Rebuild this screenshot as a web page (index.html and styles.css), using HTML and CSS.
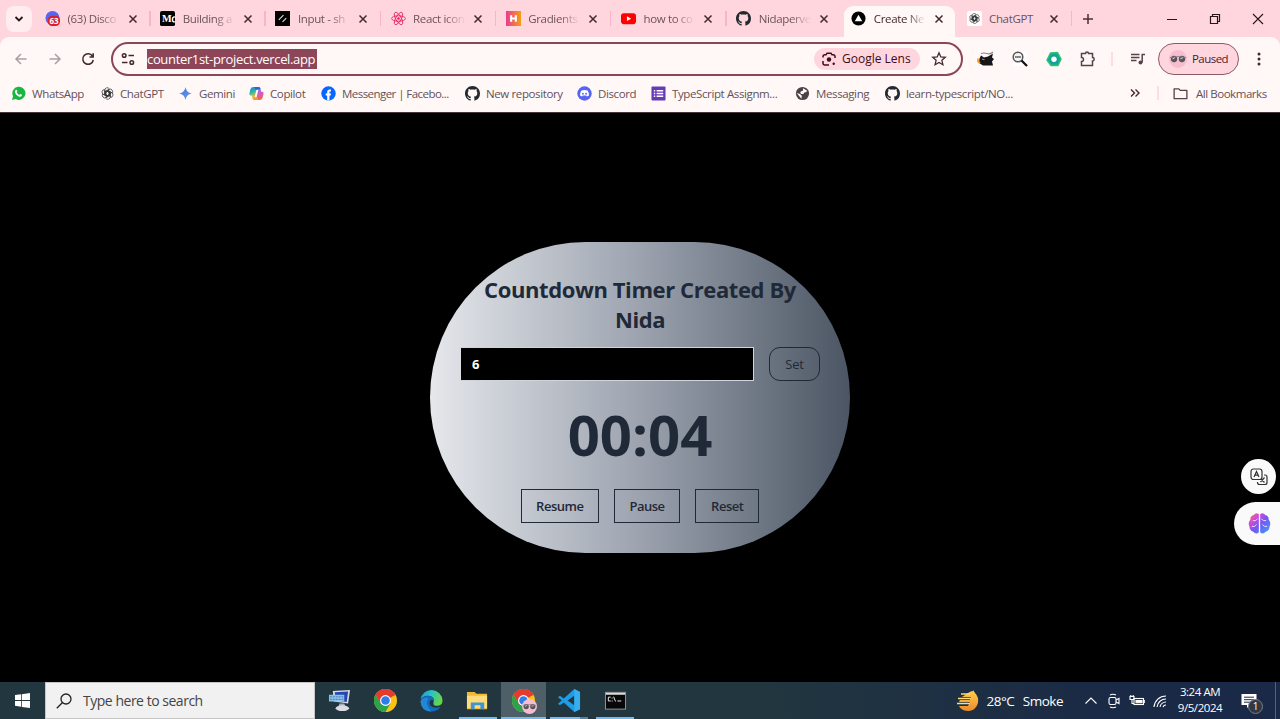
FILE: index.html
```html
<!DOCTYPE html>
<html lang="en">
<head>
<meta charset="utf-8">
<title>Countdown Timer</title>
<link rel="stylesheet" href="styles.css">
</head>
<body>
<svg class="defs" aria-hidden="true">
  <defs>
    <symbol id="x" viewBox="0 0 10 10"><path d="M1.500 1.500l7 7M8.500 1.500l-7 7" stroke="currentColor" stroke-width="1.500" fill="none"/></symbol>
    <symbol id="github" viewBox="0 0 16 16"><path fill="#24292f" d="M8 0C3.580 0 0 3.580 0 8c0 3.540 2.290 6.530 5.470 7.590.4.070.55-.17.55-.38 0-.19-.01-.82-.01-1.490-2.010.37-2.530-.49-2.690-.94-.09-.23-.48-.94-.82-1.130-.28-.15-.68-.52-.01-.53.63-.01 1.080.58 1.230.82.72 1.210 1.870.87 2.330.66.070-.52.28-.87.51-1.070-1.780-.2-3.640-.89-3.640-3.950 0-.87.31-1.590.82-2.150-.08-.2-.36-1.020.080-2.120 0 0 .67-.21 2.200.82.64-.18 1.320-.27 2-.27s1.360.09 2 .27c1.530-1.040 2.200-.82 2.200-.82.44 1.100.16 1.920.08 2.120.51.56.82 1.270.82 2.150 0 3.070-1.870 3.750-3.650 3.950.29.25.54.73.54 1.480 0 1.070-.01 1.930-.01 2.200 0 .21.15.46.55.38A8 8 0 0 0 16 8c0-4.420-3.580-8-8-8z"/></symbol>
    <symbol id="gpt" viewBox="0 0 16 16"><g fill="none" stroke="#333" stroke-width=".9"><g id="petal"><path d="M4.500 9.200V4A3.200 3.200 0 0 1 10.400 2.400M10.200 2.900L5.900 5.400q-.5.300-.5.900v3.500M5.600 6.900L8 5.500l4.300 2.500"/></g><use href="#petal" transform="rotate(60 8 8)"/><use href="#petal" transform="rotate(120 8 8)"/><use href="#petal" transform="rotate(180 8 8)"/><use href="#petal" transform="rotate(240 8 8)"/><use href="#petal" transform="rotate(300 8 8)"/></g></symbol>
    <symbol id="chrome" viewBox="0 0 24 24"><circle cx="12" cy="12" r="12" fill="#fbc116"/><path d="M12 12L1.600 6A12 12 0 0 1 22.400 6z" fill="#e33b2e"/><path d="M12 6.500h10.700A12 12 0 0 0 1.600 6l5.200 9z" fill="#e33b2e"/><path d="M1.600 6A12 12 0 0 0 12 24l5-9-10.100-.1z" fill="#2ba24c"/><circle cx="12" cy="12" r="5.700" fill="#fff"/><circle cx="12" cy="12" r="4.500" fill="#2f7de9"/></symbol>
    <symbol id="shades" viewBox="0 0 20 20"><circle cx="10" cy="10" r="10" fill="#f7bcd0"/><circle cx="5.600" cy="10" r="3.500" fill="#55555a"/><circle cx="14.400" cy="10" r="3.500" fill="#55555a"/><path d="M1 8.500q9-2.500 18 0" fill="none" stroke="#8a8087"/><path d="M4 10l2.500-1.500M12.800 10l2.500-1.500" stroke="#ccc" stroke-width="1.200"/></symbol>
    <linearGradient id="orange" x2="1"><stop stop-color="#e63d93"/><stop offset="1" stop-color="#f99b12"/></linearGradient>
    <linearGradient id="gem" x2="1" y2="1"><stop stop-color="#2f75e7"/><stop offset="1" stop-color="#7c9bea"/></linearGradient>
    <linearGradient id="copl" x2=".4" y2="1"><stop stop-color="#1c7fe0"/><stop offset=".5" stop-color="#2bb3b0"/><stop offset="1" stop-color="#f0c531"/></linearGradient>
    <linearGradient id="copr" x2=".2" y2="1"><stop stop-color="#9b6cf0"/><stop offset=".5" stop-color="#d75bb8"/><stop offset="1" stop-color="#f4683a"/></linearGradient>
    <linearGradient id="brain" x2="1" y2="1"><stop stop-color="#ff7a50"/><stop offset=".3" stop-color="#c94bdc"/><stop offset=".55" stop-color="#6d5af5"/><stop offset="1" stop-color="#3aa6f5"/></linearGradient>
    <linearGradient id="edge" x2="1" y2=".3"><stop stop-color="#1698d9"/><stop offset=".5" stop-color="#2cc1c4"/><stop offset="1" stop-color="#62d64b"/></linearGradient>
    <linearGradient id="sun" y2="1" x2="0"><stop stop-color="#ffd04a"/><stop offset="1" stop-color="#ee8a28"/></linearGradient>
  </defs>
</svg>

<div class="screen">
  <header class="browser">
    <div class="tabstrip">
      <button class="tab-search"><svg width="10" height="8" viewBox="0 0 10 8"><path d="M1.500 2L5 5.500 8.500 2" fill="none" stroke="#271519" stroke-width="1.800"/></svg></button>
      <div class="tabs">
        <div class="tab"><svg class="fav" viewBox="0 0 16 16"><circle cx="8" cy="7.500" r="7.500" fill="#5865f2"/><rect x="3" y="5" width="13" height="11" rx="4.500" fill="#d9202c"/><text x="9.600" y="13.600" font-size="8.500" font-weight="700" text-anchor="middle" fill="#fff">63</text></svg><span class="title">(63) Disco</span><svg class="close"><use href="#x"/></svg></div>
        <div class="tab"><svg class="fav" viewBox="0 0 16 16"><rect width="16" height="16" rx="2"/><text class="serif" x="2" y="12" font-size="11" font-weight="700" fill="#fff">M</text><path d="M15.800 6.500q-2.500-.5-2.500 2.500t2.500 2.500" fill="none" stroke="#fff" stroke-width="1.600"/></svg><span class="title">Building a</span><svg class="close"><use href="#x"/></svg></div>
        <div class="tab"><svg class="fav" viewBox="0 0 16 16"><rect width="16" height="16"/><path d="M4 9.500l5-5M8 11.500l4-4" stroke="#ddd" stroke-width="1.200"/></svg><span class="title">Input - sh</span><svg class="close"><use href="#x"/></svg></div>
        <div class="tab"><svg class="fav" viewBox="0 0 16 16"><g fill="none" stroke="#e91e63" stroke-width=".9"><ellipse cx="8" cy="8" rx="7.400" ry="2.900"/><ellipse cx="8" cy="8" rx="7.400" ry="2.900" transform="rotate(60 8 8)"/><ellipse cx="8" cy="8" rx="7.400" ry="2.900" transform="rotate(120 8 8)"/></g><circle cx="8" cy="8" r="1.400" fill="#e91e63"/></svg><span class="title">React icon</span><svg class="close"><use href="#x"/></svg></div>
        <div class="tab"><svg class="fav" viewBox="0 0 16 16"><rect width="16" height="16" fill="url(#orange)"/><path d="M5.500 4.500v7M10.500 4.500v7M5.500 8h5" stroke="#fff" stroke-width="2.200"/></svg><span class="title">Gradients</span><svg class="close"><use href="#x"/></svg></div>
        <div class="tab"><svg class="fav" viewBox="0 0 16 16"><rect y="2.500" width="16" height="11.500" rx="3" fill="#f00"/><path d="M6.300 5.700v5l4.500-2.500z" fill="#fff"/></svg><span class="title">how to co</span><svg class="close"><use href="#x"/></svg></div>
        <div class="tab no-sep"><svg class="fav"><use href="#github"/></svg><span class="title">Nidaperve</span><svg class="close"><use href="#x"/></svg></div>
        <div class="tab active no-sep"><svg class="fav" viewBox="0 0 16 16"><circle cx="8" cy="8" r="7.500"/><path d="M8 4l4 7H4z" fill="#fff"/></svg><span class="title">Create Ne</span><svg class="close"><use href="#x"/></svg></div>
        <div class="tab"><svg class="fav" viewBox="0 0 16 16"><rect width="16" height="16" rx="2" fill="#fff"/><use href="#gpt" x="2" y="2" width="12" height="12"/></svg><span class="title">ChatGPT</span><svg class="close"><use href="#x"/></svg></div>
      </div>
      <svg class="newtab" viewBox="0 0 10 10"><path d="M5 0v10M0 5h10" stroke="#4b2f36" stroke-width="1.500"/></svg>
      <div class="winctl">
        <svg viewBox="0 0 12 12"><path d="M1 6.500h10" stroke="#271519"/></svg>
        <svg viewBox="0 0 12 12"><path d="M1.500 3.500h7v7h-7zM3.500 3.500v-2h7v7h-2" fill="none" stroke="#271519" stroke-width="1.200"/></svg>
        <svg viewBox="0 0 12 12"><path d="M1 1l10 10M11 1L1 11" stroke="#271519" stroke-width="1.100"/></svg>
      </div>
    </div>

    <div class="toolbar">
      <div class="nav">
        <svg viewBox="0 0 16 16" class="dim"><path d="M13.500 8H3M8 3L3 8l5 5"/></svg>
        <svg viewBox="0 0 16 16" class="dim"><path d="M2.500 8H13M8 3l5 5-5 5"/></svg>
        <svg viewBox="0 0 16 16"><path d="M12.500 5A5.300 5.300 0 1 0 13.300 9M13.200 2.300v3.700H9.500"/></svg>
      </div>
      <div class="omnibox">
        <svg class="tune" viewBox="0 0 14 14"><path d="M7.500 3.500H13M1 10.500h5.500" stroke="#45282f" stroke-width="1.500"/><circle cx="3.200" cy="3.500" r="1.800" fill="none" stroke="#45282f" stroke-width="1.500"/><circle cx="10.800" cy="10.500" r="1.800" fill="none" stroke="#45282f" stroke-width="1.500"/></svg>
        <span class="url">counter1st-project.vercel.app</span>
        <span class="lens"><svg viewBox="0 0 14 14"><path d="M1 5.500V4.500A1.700 1.700 0 0 1 2.700 2.800H4L5 1.200h4l1 1.600h1.300A1.700 1.700 0 0 1 13 4.500V6M1 9v2.300A1.700 1.700 0 0 0 2.700 13H7" fill="none" stroke="#3e0b1b" stroke-width="1.500"/><circle cx="7" cy="7.500" r="2.200" fill="#3e0b1b"/><circle cx="11.700" cy="11.700" r="1.200" fill="#3e0b1b"/></svg><span>Google Lens</span></span>
        <svg class="star" viewBox="0 0 16 16"><path d="M8 1.800l1.800 4.100 4.500.4-3.400 3 1 4.400L8 11.400l-3.900 2.300 1-4.400-3.400-3 4.500-.4z" fill="none" stroke="#45282f" stroke-width="1.300"/></svg>
      </div>
      <div class="exts">
        <svg viewBox="0 0 18 18"><path d="M2.500 8.500L4 5.500l3 2 4-1 5-3-1 4 2 1.500-2 2.500 1 4H6l-4-2.500z" fill="#161719"/><path d="M4 3.500q3-1 6 0t6-1.500" fill="none" stroke="#888" stroke-width="1.200"/><path d="M1 8.500v3l2 1.500" stroke="#f29b25" stroke-width="1.700" fill="none"/><path d="M5 9l2.500.7" stroke="#999"/></svg>
        <svg viewBox="0 0 18 18"><rect x="2" y="2" width="14" height="14" fill="#fff"/><circle cx="7" cy="7" r="4.800" fill="#f4f4f4" stroke="#555" stroke-width="1.500"/><path d="M4.200 7h5.600" stroke="#333" stroke-width="1.600" stroke-dasharray="1.500 .5"/><path d="M10.500 10.500l5.500 5.500" stroke="#111" stroke-width="2.300"/></svg>
        <svg viewBox="0 0 18 18"><path d="M5.500 3l7-.5L16 9l-3 6.500H6L2 10z" fill="#12a889" stroke="#2fc277" stroke-width="1.500" stroke-linejoin="round"/><circle cx="9" cy="9.300" r="4" fill="#14a0a0"/><circle cx="9" cy="9.300" r="2.700" fill="#fff"/></svg>
        <svg viewBox="0 0 18 18"><path d="M2.500 3.500h4a1.500 1.500 0 0 1 3 0h4v4a1.700 1.700 0 0 1 0 3.400v4.600h-11v-4a2 2 0 0 0 0-4z" fill="none" stroke="#574248" stroke-width="1.500"/></svg>
      </div>
      <i class="divider"></i>
      <svg class="media" viewBox="0 0 16 16"><path d="M1 3.500h8.500M1 6.500h8.500M1 9.500h5.500M12.200 11.500V3.400H15" fill="none" stroke="#574248" stroke-width="1.500"/><circle cx="10.500" cy="11.500" r="2" fill="#574248"/></svg>
      <div class="profile"><svg><use href="#shades"/></svg><span>Paused</span></div>
      <svg class="kebab" viewBox="0 0 4 14"><g fill="#45282f"><circle cx="2" cy="2" r="1.500"/><circle cx="2" cy="7" r="1.500"/><circle cx="2" cy="12" r="1.500"/></g></svg>
    </div>

    <div class="bookmarks">
      <div class="marks">
        <a><svg viewBox="0 0 16 16"><path d="M1 15l1.200-4A7 7 0 1 1 5 13.900z" fill="#16b83e"/><path d="M4.700 4.500c1-1 1.500-.3 2 1 .2.500-.8.900-.5 1.400.8 1.400 1.500 2 2.700 2.500.5.100.8-1 1.200-.9 1.800.8 1.900 1 1.300 1.900-1 1.600-3 1-4.800-.4C4.400 8.300 3.600 6 4.700 4.500z" fill="#fff"/></svg><span>WhatsApp</span></a>
        <a><svg class="small"><use href="#gpt"/></svg><span>ChatGPT</span></a>
        <a><svg viewBox="0 0 16 16"><path d="M8 1c.8 4.200 2.800 6.200 7 7-4.200.8-6.200 2.800-7 7-.8-4.200-2.800-6.200-7-7 4.200-.8 6.200-2.800 7-7z" fill="url(#gem)"/></svg><span>Gemini</span></a>
        <a><svg viewBox="0 0 16 16"><path d="M5 1h5.500L8 3.500 6 12H3.500L3 10H2Q0 10 .5 7.500l1-4Q2.200 1 5 1z" fill="url(#copl)"/><path d="M11 15H5.500L8 12.500 10 4h2.500l.5 2h1q2 0 1.500 2.500l-1 4Q13.800 15 11 15z" fill="url(#copr)"/><path d="M6 1h4.500q1.200 0 1.600 1.500L12.500 4H7z" fill="#2467d8"/><path d="M10 15H5.500q-1.200 0-1.600-1.500L3.500 12H9z" fill="#f39a35"/></svg><span>Copilot</span></a>
        <a class="tight"><svg viewBox="0 0 16 16"><circle cx="8" cy="8" r="7.700" fill="#0866ff"/><path d="M6.600 15.500v-5.300H5V7.900h1.600V6.600c0-2.300 1.200-3.300 4-2.800v2C9.200 5.700 9 6 9 6.800v1.100h1.700l-.4 2.300H9v5.300z" fill="#fff"/></svg><span>Messenger | Facebo...</span></a>
        <a><svg><use href="#github"/></svg><span>New repository</span></a>
        <a><svg viewBox="0 0 16 16"><circle cx="8" cy="8" r="7.700" fill="#5865f2"/><path d="M4.500 5q3.500-1.300 7 0 1.500 2.500 1.300 5.200l-2.300 1-.7-1H6.200l-.7 1-2.300-1Q3 7.500 4.500 5z" fill="#fff"/><circle cx="6.300" cy="8.200" r="1" fill="#5865f2"/><circle cx="9.700" cy="8.200" r="1" fill="#5865f2"/></svg><span>Discord</span></a>
        <a><svg viewBox="0 0 16 16"><rect x=".5" y=".5" width="15" height="15" rx="1" fill="#673ab7"/><path d="M6 5h7M6 8h7M6 11h7M3 5h1.500M3 8h1.500M3 11h1.500" stroke="#fff" stroke-width="1.500"/></svg><span>TypeScript Assignm...</span></a>
        <a><svg viewBox="0 0 16 16"><circle cx="8" cy="8" r="7" fill="#4a4246"/><path d="M8.500 2.300L13 5l-1 1.500-2 .5-1 1.500H6.500L5.500 7l1-1.500 2-.5zM1.800 7.500l3.500 1 2 2-.5 3z" fill="#fff8f7"/></svg><span>Messaging</span></a>
        <a><svg><use href="#github"/></svg><span>learn-typescript/NO...</span></a>
      </div>
      <svg class="more" viewBox="0 0 10 10"><path d="M1 1.500L4.500 5 1 8.500M5.500 1.500L9 5 5.500 8.500" fill="none" stroke="#45282f" stroke-width="1.400"/></svg>
      <i class="divider"></i>
      <a class="all"><svg viewBox="0 0 16 16"><path d="M1.200 3h5l1.500 1.700h7.100v8.800H1.200z" fill="none" stroke="#574248" stroke-width="1.400" stroke-linejoin="round"/></svg><span>All Bookmarks</span></a>
    </div>
  </header>

  <main class="page">
    <section class="card">
      <h1>Countdown Timer Created By Nida</h1>
      <div class="entry"><div class="field">6</div><button class="btn set">Set</button></div>
      <div class="time">00:04</div>
      <div class="actions"><button class="btn resume">Resume</button><button class="btn pause">Pause</button><button class="btn reset">Reset</button></div>
    </section>
    <div class="float translate"><svg viewBox="0 0 18 18"><g fill="none" stroke="#333" stroke-width="1.200"><rect x="1" y="1" width="11" height="10.500" rx="2.500"/><path d="M14 7h1q2 0 2 2v5.500q0 2-2 2H9.500q-2 0-2-2V14M4 9l2.500-5.500L9 9M5 7.200h3M14.500 9.500L10.500 14M11 11l3.500 3.500"/></g></svg></div>
    <div class="float brain"><svg viewBox="0 0 24 24"><path d="M11.300 2Q8 0 6 3 2 4 2.500 8q-3 3-1 7 0 4 4 5.500 3 3.500 5.800.5zM12.700 2q3.300-2 5.300 1 4 1 3.500 5 3 3 1 7 0 4-4 5.500-3 3.500-5.800.5z" fill="url(#brain)"/><path d="M5 9h3l2-2M4 15h3l2-2M19 9h-3l-2-2M20 15h-3l-2-2" fill="none" stroke="#f3dcff" stroke-width="1"/></svg></div>
  </main>

  <footer class="taskbar">
    <div class="start"><svg viewBox="0 0 16 16"><path d="M0 2.200L6.500 1.300v6.200H0zM7.300 1.200L16 0v7.500H7.300zM0 8.400h6.500v6.200L0 13.700zM7.300 8.400H16V16l-8.700-1.200z" fill="#fff"/></svg></div>
    <div class="search"><svg viewBox="0 0 16 16"><circle cx="10" cy="6" r="5" fill="none" stroke="#222" stroke-width="1.300"/><path d="M6.500 9.500L.8 15.200" stroke="#222" stroke-width="1.300"/></svg><span>Type here to search</span></div>
    <div class="apps">
      <div class="app"><svg viewBox="0 0 24 24"><path d="M5 2l18-1-2 14-15-2z" fill="#d7dce6"/><path d="M7 3.500l14-1-1.500 11L8 12z" fill="#2646b4"/><rect x="1" y="6" width="16" height="7" fill="#8dc2e8"/><path d="M2 8.200h14M2 10.800h14" stroke="#397bb7" stroke-dasharray="2 1"/><path d="M12 15h5l1 3h-7z" fill="#a9afbb"/><ellipse cx="15" cy="20" rx="7" ry="3" fill="#dadde2"/></svg></div>
      <div class="app"><svg><use href="#chrome"/></svg></div>
      <div class="app"><svg viewBox="0 0 24 24"><path d="M.6 11A11.500 11.500 0 0 1 23.500 12q0 5-5 5.500-5 0-4.500-3Q16 8 9 7 3 7 .6 11z" fill="url(#edge)"/><path d="M.5 13Q2 7 8.500 7q6 .5 6 5.500-1-1.500-3-1-2.500 2-1 5.500 3 4 11 1.500Q18 23.500 12 23.500 1.500 23.500.5 13z" fill="#1769bd"/><path d="M.5 13Q2.500 8 9 9.500q-5 5.500 3 14Q1.500 23.500.5 13z" fill="#2388d4"/></svg></div>
      <div class="app open"><svg viewBox="0 0 24 24"><path d="M1 3h8l2 2h11v16H1z" fill="#f2b936"/><path d="M1 7h21v13H1z" fill="#ffdc7b"/><path d="M5 21v-7h14v7h-4v-4H9v4z" fill="#3f94d2"/></svg></div>
      <div class="app open current"><svg><use href="#chrome"/></svg><svg class="avatar"><use href="#shades"/></svg></div>
      <div class="app open code"><svg viewBox="0 0 24 24"><path d="M17 0l6 3v18l-6 3L6 14l-4 3-2-1.500L4 12 0 8.500 2 7l4 3zM17 7l-7 5 7 5z" fill="#209ce4"/><path d="M17 0l6 3v18l-6 3z" fill="#36aef0"/></svg></div>
      <div class="app open"><svg viewBox="0 0 24 24"><rect x="1.500" y="3.500" width="21" height="17.500" fill="#080808" stroke="#999"/><path d="M2 5h20" stroke="#ddd" stroke-width="2"/><path d="M7 8.500H4.500v4H7M8.500 9v1M8.500 12v1M10 8l2 5M14 12.500h4" fill="none" stroke="#eee"/></svg></div>
    </div>
    <div class="weather"><svg viewBox="0 0 24 24"><path d="M12 4q3-2 5-2V1l2 3q4 4 3 10-2 7-9 8-8 0-10-5h9l2-4H3l1-2h10l1-3H6z" fill="url(#sun)"/><path d="M5 5h9M2 9.500h13M1 14.500h13" stroke="#ffda75" stroke-width="1.600"/></svg><span>28°C</span><span>Smoke</span></div>
    <div class="tray">
      <svg viewBox="0 0 16 16"><path d="M2.500 10.500L8 5l5.500 5.500"/></svg>
      <svg viewBox="0 0 16 16"><rect x="3" y="4.500" width="7" height="7" rx="1.500"/><path d="M10 7l3-1.500v5L10 9M4 2q3-1.500 6 0M4 14q3 1.500 6 0"/></svg>
      <svg viewBox="0 0 16 16"><rect x="5" y="5.500" width="9.500" height="6"/><path d="M7 7.500h6v2.200H7z" fill="#fff"/><path d="M1 3.500h4v3H1zM3 6.500v4h2M1.800 3.500V2M4.200 3.500V2M15.300 7v3"/></svg>
      <svg viewBox="0 0 16 16"><path d="M2 14A12 12 0 0 1 14 3M5 14a9 9 0 0 1 9-8M8 14a6 6 0 0 1 6-5M11 14a3 3 0 0 1 3-2"/></svg>
    </div>
    <div class="clock"><span>3:24 AM</span><span>9/5/2024</span></div>
    <div class="notify"><svg viewBox="0 0 16 16"><path d="M.5 1h15v11H9l-3 3v-3H.5z" fill="#fff"/><path d="M3 4.200h10M3 6.700h10M3 9.200h7" stroke="#1b2b45"/></svg><b>1</b></div>
  </footer>
</div>
</body>
</html>
```
FILE: styles.css
```css
* { box-sizing: border-box; }
body { margin: 0; font-family: "Open Sans", "Noto Sans", sans-serif; overflow: hidden; }
button { font: inherit; background: none; border: 0; padding: 0; }
svg { display: block; flex: none; }
.defs { position: absolute; width: 0; height: 0; }
.screen { width: 1280px; height: 719px; display: flex; flex-direction: column; background: #000; }

.browser { height: 113px; background: #ffd6de; border-bottom: 1px solid #45343a; flex: none; display: flex; flex-direction: column; }
.tabstrip { height: 37px; display: flex; align-items: center; padding-left: 6px; flex: none; }
.tab-search { width: 26px; height: 26px; border-radius: 8px; background: #ffedf0; display: flex; align-items: center; justify-content: center; }
.tabs { display: flex; height: 37px; margin-left: 3px; }
.tab { width: 115.2px; display: flex; align-items: center; padding-left: 10px; position: relative; color: #6b535a; }
.tab:not(.no-sep)::after { content: ""; position: absolute; right: -.5px; top: 11px; width: 1.500px; height: 15px; background: #fbb4c5; }
.fav { width: 15px; height: 15px; }
.serif { font-family: "Liberation Serif", serif; }
.title { min-width: 52px; width: 52px; margin-left: 7.500px; white-space: nowrap; font-size: 11.500px; letter-spacing: -.35px; line-height: 20px; -webkit-mask-image: linear-gradient(90deg, #000 62%, rgba(0,0,0,.1) 96%); mask-image: linear-gradient(90deg, #000 62%, rgba(0,0,0,.1) 96%); }
.tab:last-child .title { font-size: 11.500px; -webkit-mask-image: none; mask-image: none; }
.close { width: 10px; height: 10px; margin-left: 8px; color: #45282f; }
.tab.active { color: #45282f; }
.tab.active > * { z-index: 1; }
.tab.active::before { content: ""; position: absolute; left: 3px; right: 2px; top: 6px; bottom: 0; border-radius: 9px 9px 0 0; background: #fff8f7; }
.newtab { width: 10px; height: 10px; margin-left: 11px; }
.winctl { display: flex; gap: 31px; margin-left: auto; margin-right: 16px; }
.winctl svg { width: 12px; height: 12px; }

.toolbar { height: 43px; flex: none; background: #fff8f7; border-radius: 9px 9px 0 0; display: flex; align-items: center; }
.nav { width: 111px; display: flex; gap: 17.500px; padding-left: 13px; }
.nav svg { width: 16px; height: 16px; fill: none; stroke: #45282f; stroke-width: 1.500; }
.nav .dim { stroke: #aaa0a2; }
.omnibox { width: 852px; height: 34px; border: 2px solid #8d4558; border-radius: 17px; display: flex; align-items: center; padding: 0 14px 0 8px; }
.tune { width: 14px; height: 14px; }
.url { margin-left: 12px; height: 20px; width: 170px; line-height: 20px; background: #8d4558; color: #fff; font-size: 13px; letter-spacing: -.34px; white-space: nowrap; }
.lens { margin-left: auto; width: 106px; height: 22px; border-radius: 11px; background: #ffd6de; display: flex; align-items: center; padding-left: 8px; gap: 6px; font-size: 12px; font-weight: 500; letter-spacing: 0; color: #3e0b1b; white-space: nowrap; }
.lens svg { width: 14px; height: 14px; }
.star { width: 16px; height: 16px; margin-left: 11px; }
.exts { display: flex; gap: 16px; margin-left: 14px; }
.exts svg { width: 18px; height: 18px; }
.divider { width: 2px; height: 14px; background: #ffdce3; flex: none; }
.exts + .divider { margin-left: 14px; }
.media { width: 16px; height: 16px; margin-left: 17px; }
.profile { width: 81px; height: 32px; border: 1px solid #8d5b68; border-radius: 16px; background: #ffd6de; margin-left: 12px; display: flex; align-items: center; gap: 5px; padding-left: 10px; font-size: 11.500px; letter-spacing: -.55px; color: #4e202d; }
.profile svg { width: 18px; height: 18px; }
.kebab { width: 4px; height: 14px; margin-left: 18px; }

.bookmarks { flex: 1; background: #fff8f7; display: flex; align-items: center; padding: 0 0 6px 11px; color: #655057; font-size: 11.500px; letter-spacing: -.38px; }
.marks { display: grid; grid-template-columns: 89px 78px 71px 72px 144px 112px 74px 144px 90px 135px; }
.bookmarks a { display: flex; align-items: center; gap: 6px; white-space: nowrap; }
.bookmarks a svg { width: 15px; height: 15px; }
.bookmarks a .small { width: 13px; height: 13px; margin-left: 1px; }
.bookmarks .tight { letter-spacing: -.55px; }
.more { width: 10px; height: 10px; margin-left: 110px; }
.bookmarks .divider { margin-left: 17px; }
.bookmarks .all { margin-left: 14px; gap: 8px; letter-spacing: -.46px; }

.page { flex: 1; position: relative; display: flex; justify-content: center; align-items: center; color: #1f2937; border-top: 1px solid #000; padding-bottom: 1px; }
.card { width: 420px; height: 311px; padding: 30px; border-radius: 155.500px; background: linear-gradient(90deg, #e5e7eb, #9ca3af 50%, #4b5563); display: flex; flex-direction: column; }
h1 { margin: 0; padding-top: 2px; font-size: 22px; line-height: 30px; text-align: center; letter-spacing: -.4px; }
.card .entry { display: flex; gap: 15px; margin-top: 13px; }
.field { flex: 1; height: 34px; background: #000; border: 1px solid #d1d5db; border-left: 0; margin-left: .5px; padding-left: 11.500px; line-height: 33px; font-size: 13px; font-weight: 700; color: #fff; }
.btn { height: 34px; border: 1px solid #1f2937; font-size: 13px; font-weight: 500; letter-spacing: -.2px; color: #1f2937; white-space: nowrap; }
.set { width: 51px; border-radius: 11px; }
.time { margin-top: 23px; height: 60px; line-height: 60px; text-align: center; font-size: 56.250px; font-weight: 700; }
.actions { margin-top: 25px; display: flex; gap: 15px; justify-content: center; }
.actions .btn { font-weight: 600; letter-spacing: -.5px; }
.resume { width: 78px; }
.pause { width: 66.500px; }
.reset { width: 64px; }
.float { position: absolute; right: 0; background: #fafafa; display: flex; align-items: center; justify-content: center; }
.translate { right: 4px; top: 345px; width: 35px; height: 35px; border-radius: 50%; }
.translate svg { width: 18px; height: 18px; }
.float.brain { top: 388px; width: 46px; height: 43px; border-radius: 22px 0 0 22px; padding-left: 4px; }
.brain svg { width: 23px; height: 23px; }

.taskbar { height: 37px; flex: none; display: flex; background: linear-gradient(90deg, #21363f 0%, #21363f 60%, #1a2946 88%, #1b2948); color: #fff; }
.start { width: 45px; display: flex; align-items: center; justify-content: center; }
.start svg { width: 15px; height: 15px; }
.search { width: 270px; background: #f1f1f1; border: 1px solid #c5c5c5; display: flex; align-items: center; gap: 11px; padding-left: 10px; font-size: 14px; letter-spacing: -.48px; color: #444; }
.search svg { width: 16px; height: 16px; }
.apps { display: flex; margin-left: 2px; }
.app { width: 45.900px; display: flex; align-items: center; justify-content: center; position: relative; }
.app svg { width: 23px; height: 23px; }
.app.open::after { content: ""; position: absolute; left: 4px; right: 4px; bottom: 0; height: 2px; background: #76b9ed; }
.app.current { background: #4e5f67; }
.app.current::after { left: 0; right: 0; }
.app .avatar { position: absolute; width: 15px; height: 15px; right: 9px; bottom: 5px; }
.app.code::after { background: linear-gradient(90deg, #76b9ed 80%, #55809f 80%); }
.weather { margin-left: auto; display: flex; align-items: center; font-size: 13.500px; letter-spacing: -.5px; white-space: nowrap; }
.weather svg { width: 24px; height: 24px; margin-right: 7px; }
.weather span + span { margin-left: 8.500px; }
.tray { display: flex; align-items: center; gap: 7px; margin-left: 20px; }
.tray svg { width: 16px; height: 16px; fill: none; stroke: #fff; stroke-width: 1.100; }
.clock { width: 64px; display: flex; flex-direction: column; align-items: center; font-size: 11.500px; line-height: 16px; letter-spacing: -.45px; padding-top: 2px; }
.notify { width: 44px; margin-right: 4px; border-right: 1px solid #53617a; position: relative; display: flex; align-items: center; padding-left: 9px; }
.notify svg { width: 16px; height: 16px; }
.notify b { position: absolute; left: 16px; top: 17px; width: 15px; height: 15px; border-radius: 50%; background: #303843; border: 1px solid #777f8a; font-size: 10px; line-height: 13px; text-align: center; font-weight: 400; }
```
